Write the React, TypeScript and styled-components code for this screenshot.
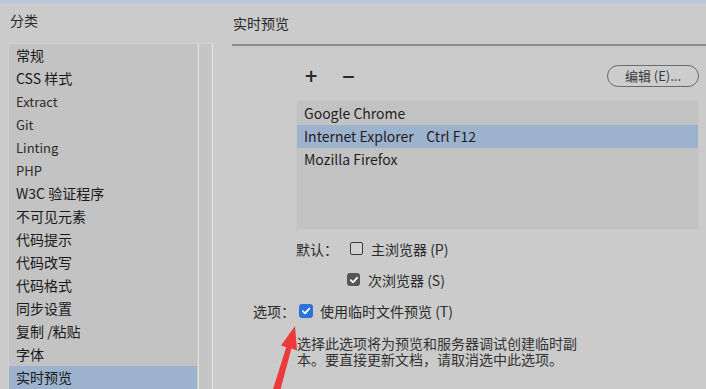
import React from "react";
import styled, { createGlobalStyle } from "styled-components";

const GlobalStyle = createGlobalStyle`
  html, body {
    margin: 0;
    padding: 0;
    background: #cbcbcb;
  }
  body {
    font-family: "Noto Sans CJK SC", "Open Sans", sans-serif;
    font-size: 14px;
    color: #1e1e1e;
  }
`;

const Window = styled.div`
  position: relative;
  height: 389px;
  overflow: hidden;
  border-top: 3px solid #b7c8dd;
  box-sizing: border-box;
  display: flex;
  flex-flow: row nowrap;
`;

const LeftColumn = styled.div`
  display: flex;
  flex-flow: column nowrap;
  width: 205px;
  margin-left: 8px;
`;

const RightColumn = styled.div`
  display: flex;
  flex-flow: column nowrap;
  flex: 1;
  margin-left: 19px;
`;

const SectionTitle = styled.div<{ $ruled?: boolean }>`
  height: ${(p) => (p.$ruled ? "40px" : "41px")};
  padding-left: ${(p) => (p.$ruled ? "1px" : "2px")};
  line-height: ${(p) => (p.$ruled ? "38px" : "34px")};
  color: #2a2a2a;
  border-bottom: ${(p) => (p.$ruled ? "2px solid #8d8d8d" : "none")};
  box-sizing: content-box;
  padding-top: ${(p) => (p.$ruled ? "1px" : "0")};
`;

const CategoryBox = styled.div`
  flex: 1;
  display: flex;
  flex-flow: row nowrap;
  border-top: 1px solid #d2d2d2;
  border-left: 1px solid #d0d0d0;
`;

const CategoryList = styled.div`
  width: 188px;
  background: #c3c3c3;
  display: flex;
  flex-flow: column nowrap;
`;

const CategoryItem = styled.div<{ $active?: boolean; $latin?: boolean }>`
  flex: 0 0 23px;
  line-height: 23px;
  padding-left: 7px;
  white-space: nowrap;
  background: ${(p) => (p.$active ? "#9db2cc" : "transparent")};
  color: ${(p) => (p.$latin ? "#2c2c2c" : "#1a1a1a")};
  font-size: ${(p) => (p.$latin ? "13px" : "14px")};
`;

const ScrollTrack = styled.div`
  width: 13px;
  margin-left: 1px;
  background: #c5c5c5;
  border-left: 1px solid #e2e2e2;
  border-right: 1px solid #e6e6e6;
`;

const Content = styled.div`
  display: flex;
  flex-flow: column nowrap;
  padding-right: 7px;
`;

const Toolbar = styled.div`
  display: flex;
  flex-flow: row nowrap;
  align-items: center;
  height: 22px;
  padding: 19px 0 13px 64px;
`;

const ToolGlyph = styled.span<{ $first?: boolean }>`
  font-family: "DejaVu Sans", sans-serif;
  font-size: 17px;
  font-weight: bold;
  color: #2a2a2a;
  margin-left: ${(p) => (p.$first ? "8px" : "23px")};
  line-height: 22px;
`;

const PillButton = styled.button`
  margin-left: auto;
  width: 92px;
  height: 22px;
  border: 1px solid #6a6a6a;
  border-radius: 11px;
  background: #cdcdcd;
  color: #3a3a3a;
  font-family: "Noto Sans CJK SC", "Open Sans", sans-serif;
  font-size: 13px;
  padding: 0;
  line-height: 20px;
`;

const BrowserBox = styled.div`
  margin-left: 64px;
  height: 130px;
  background: #c2c2c2;
  border: 1px solid #c8c8c8;
  padding-top: 1px;
  box-sizing: border-box;
  display: flex;
  flex-flow: column nowrap;
`;

const BrowserRow = styled.div<{ $active?: boolean }>`
  height: 23px;
  line-height: 23px;
  padding-left: 7px;
  background: ${(p) => (p.$active ? "#9db2cc" : "transparent")};
  color: #1e1e1e;
  white-space: pre;
`;

const OptionRow = styled.div<{ $indent: number; $lead?: number }>`
  display: flex;
  flex-flow: row nowrap;
  align-items: center;
  height: 31px;
  margin-top: ${(p) => p.$lead ?? 0}px;
  padding-left: ${(p) => p.$indent}px;
  white-space: nowrap;
`;

const Label = styled.span<{ $gap: number }>`
  color: #2a2a2a;
  margin-right: ${(p) => p.$gap}px;
`;

const Box = styled.span<{ $kind: "empty" | "gray" | "blue" }>`
  display: inline-flex;
  align-items: center;
  justify-content: center;
  box-sizing: border-box;
  width: ${(p) => (p.$kind === "blue" ? "14px" : "13px")};
  height: ${(p) => (p.$kind === "blue" ? "14px" : "13px")};
  margin-right: ${(p) => (p.$kind === "blue" ? "7px" : "8px")};
  border-radius: ${(p) => (p.$kind === "empty" ? "2px" : "3px")};
  border: ${(p) => (p.$kind === "empty" ? "1px solid #3c3c3c" : "none")};
  background: ${(p) =>
    p.$kind === "blue" ? "#2c72dc" : p.$kind === "gray" ? "#565656" : "#d2d2d2"};
`;

const OptionText = styled.span`
  color: #2a2a2a;
`;

const Description = styled.div`
  padding: 9px 0 0 65px;
  font-size: 14px;
  line-height: 16px;
  color: #333;
`;

const ArrowMark = styled.svg`
  position: absolute;
  left: 260px;
  top: 318px;
  width: 50px;
  height: 71px;
`;

function Check() {
  return (
    <svg width="10" height="10" viewBox="0 0 10 10">
      <path d="M1.8 5.2 L4 7.4 L8.3 2.6" fill="none" stroke="#fff" strokeWidth="1.8" strokeLinecap="round" strokeLinejoin="round" />
    </svg>
  );
}

function Checkbox({ kind }: { kind: "empty" | "gray" | "blue" }) {
  return <Box $kind={kind}>{kind !== "empty" && <Check />}</Box>;
}

const categories = [
  { name: "常规" },
  { name: "CSS 样式" },
  { name: "Extract", latin: true },
  { name: "Git", latin: true },
  { name: "Linting", latin: true },
  { name: "PHP", latin: true },
  { name: "W3C 验证程序" },
  { name: "不可见元素" },
  { name: "代码提示" },
  { name: "代码改写" },
  { name: "代码格式" },
  { name: "同步设置" },
  { name: "复制 /粘贴" },
  { name: "字体" },
  { name: "实时预览", active: true },
];

const browsers = [
  { name: "Google Chrome" },
  { name: "Internet Explorer    Ctrl F12", active: true },
  { name: "Mozilla Firefox" },
];

export default function App() {
  return (
    <>
      <GlobalStyle />
      <Window>
        <LeftColumn>
          <SectionTitle>分类</SectionTitle>
          <CategoryBox>
            <CategoryList>
              {categories.map((c) => (
                <CategoryItem key={c.name} $active={c.active} $latin={c.latin}>
                  {c.name}
                </CategoryItem>
              ))}
            </CategoryList>
            <ScrollTrack />
          </CategoryBox>
        </LeftColumn>
        <RightColumn>
          <SectionTitle $ruled>实时预览</SectionTitle>
          <Content>
            <Toolbar>
              <ToolGlyph $first>+</ToolGlyph>
              <ToolGlyph>−</ToolGlyph>
              <PillButton>编辑 (E)...</PillButton>
            </Toolbar>
            <BrowserBox>
              {browsers.map((b) => (
                <BrowserRow key={b.name} $active={b.active}>
                  {b.name}
                </BrowserRow>
              ))}
            </BrowserBox>
            <OptionRow $indent={64} $lead={3}>
              <Label $gap={12}>默认：</Label>
              <Checkbox kind="empty" />
              <OptionText>主浏览器 (P)</OptionText>
            </OptionRow>
            <OptionRow $indent={115}>
              <Checkbox kind="gray" />
              <OptionText>次浏览器 (S)</OptionText>
            </OptionRow>
            <OptionRow $indent={21}>
              <Label $gap={4}>选项：</Label>
              <Checkbox kind="blue" />
              <OptionText>使用临时文件预览 (T)</OptionText>
            </OptionRow>
            <Description>
              选择此选项将为预览和服务器调试创建临时副
              <br />
              本。要直接更新文档，请取消选中此选项。
            </Description>
          </Content>
        </RightColumn>
        <ArrowMark viewBox="0 0 50 71">
          <polygon
            points="35,5 37,29.5 31.4,27.6 19.6,72 12.4,70 26.2,26.2 21,24.6"
            fill="#ee3a3a"
          />
        </ArrowMark>
      </Window>
    </>
  );
}
